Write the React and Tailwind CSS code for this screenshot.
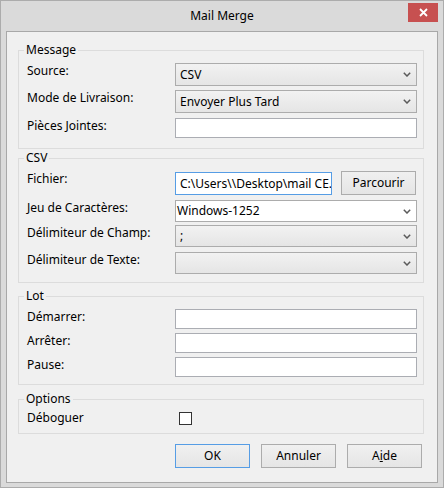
import React from "react";

function Chevron() {
  return (
    <svg width="8" height="5" viewBox="0 0 8 5" className="shrink-0">
      <path d="M0.8 0.8 L4 4 L7.2 0.8" fill="none" stroke="#5a5a5a" strokeWidth="1.5" />
    </svg>
  );
}

function Select({ value, editable, h = "h-[22px]" }) {
  return (
    <div
      className={`flex w-[242px] items-center border border-[#acacac] pr-[5px] ${h} ${
        editable ? "bg-white pl-[1px]" : "bg-linear-to-b from-[#f2f2f2] to-[#e5e5e5] pl-[4px]"
      }`}
    >
      <span className="flex-1 whitespace-nowrap">{value}</span>
      <Chevron />
    </div>
  );
}

function TextInput() {
  return <div className="h-[20px] w-[242px] border border-[#abadb3] bg-white" />;
}

function Button({ children, focused, w = "w-[75px]" }) {
  return (
    <div
      className={`flex h-[24px] ${w} items-center justify-center border bg-linear-to-b from-[#f0f0f0] to-[#e5e5e5] ${
        focused ? "border-[#569de5]" : "border-[#acacac]"
      }`}
    >
      {children}
    </div>
  );
}

function Row({ label, children, className = "" }) {
  return (
    <div className={`flex items-start ${className}`}>
      <span className="w-[148px] shrink-0">{label}</span>
      {children}
    </div>
  );
}

function Group({ title, className = "", children }) {
  return (
    <fieldset className={`ml-[11px] w-[406px] border border-[#dcdcdc] pl-[8px] pr-[6px] ${className}`}>
      <legend className="ml-[-3px] px-[2px] leading-[14px]">{title}</legend>
      {children}
    </fieldset>
  );
}

export default function App() {
  return (
    <div className="min-h-[491px] bg-white font-['Noto_Sans',sans-serif] text-[12px] leading-4 text-black">
      <div className="flex h-[488px] w-[444px] flex-col border border-[#acacac] bg-[#dadada] px-[5px] pb-[4px]">
        <div className="grid h-[30px] grid-cols-[1fr_auto_1fr]">
          <div />
          <div className="self-center">Mail Merge</div>
          <div className="flex justify-end">
            <div className="mt-[2px] flex h-[19px] w-[30px] items-center justify-center bg-[#c75050]">
              <svg width="9" height="9" viewBox="0 0 9 9">
                <path d="M1 1 L8 8 M8 1 L1 8" stroke="#fff" strokeWidth="1.8" />
              </svg>
            </div>
          </div>
        </div>

        <div className="flex flex-1 flex-col border border-[#a8a8a8] bg-[#f0f0f0]">
          <Group title="Message" className="mt-[11px] pt-[6px] pb-[10px]">
            <Row label="Source:">
              <Select value="CSV" h="h-[23px]" />
            </Row>
            <Row label="Mode de Livraison:" className="mt-[4px]">
              <Select value="Envoyer Plus Tard" h="h-[23px]" />
            </Row>
            <Row label="Pièces Jointes:" className="mt-[5px]">
              <TextInput />
            </Row>
          </Group>

          <Group title="CSV" className="mt-[2px] pt-[6px] pb-[8px]">
            <Row label="Fichier:">
              <div className="flex gap-[9px]">
                <div className="mt-[1px] flex h-[23px] w-[157px] items-center overflow-hidden whitespace-nowrap border border-[#569de5] bg-white pl-[4px]">
                  <span>{"C:\\Users\\"}</span>
                  <span className="inline-block h-[14px] w-px bg-black" />
                  <span>{"\\Desktop\\mail CE.csv"}</span>
                </div>
                <Button>Parcourir</Button>
              </div>
            </Row>
            <Row label="Jeu de Caractères:" className="mt-[5px]">
              <Select value="Windows-1252" editable />
            </Row>
            <Row label="Délimiteur de Champ:" className="mt-[3px]">
              <Select value=";" />
            </Row>
            <Row label="Délimiteur de Texte:" className="mt-[5px]">
              <Select value="" />
            </Row>
          </Group>

          <Group title="Lot" className="mt-[6px] pt-[6px] pb-[7px]">
            <Row label="Démarrer:">
              <TextInput />
            </Row>
            <Row label="Arrêter:" className="mt-[4px]">
              <TextInput />
            </Row>
            <Row label="Pause:" className="mt-[4px]">
              <TextInput />
            </Row>
          </Group>

          <Group title="Options" className="mt-[7px] pt-[4px] pb-[7px]">
            <Row label="Déboguer">
              <div className="ml-[4px] mt-[2px] h-[13px] w-[13px] border border-[#333333] bg-white" />
            </Row>
          </Group>

          <div className="mt-[10px] flex justify-end gap-[11px] pr-[15px]">
            <Button focused>OK</Button>
            <Button>Annuler</Button>
            <Button>
              <span>
                A<span className="underline">i</span>de
              </span>
            </Button>
          </div>
        </div>
      </div>
    </div>
  );
}
